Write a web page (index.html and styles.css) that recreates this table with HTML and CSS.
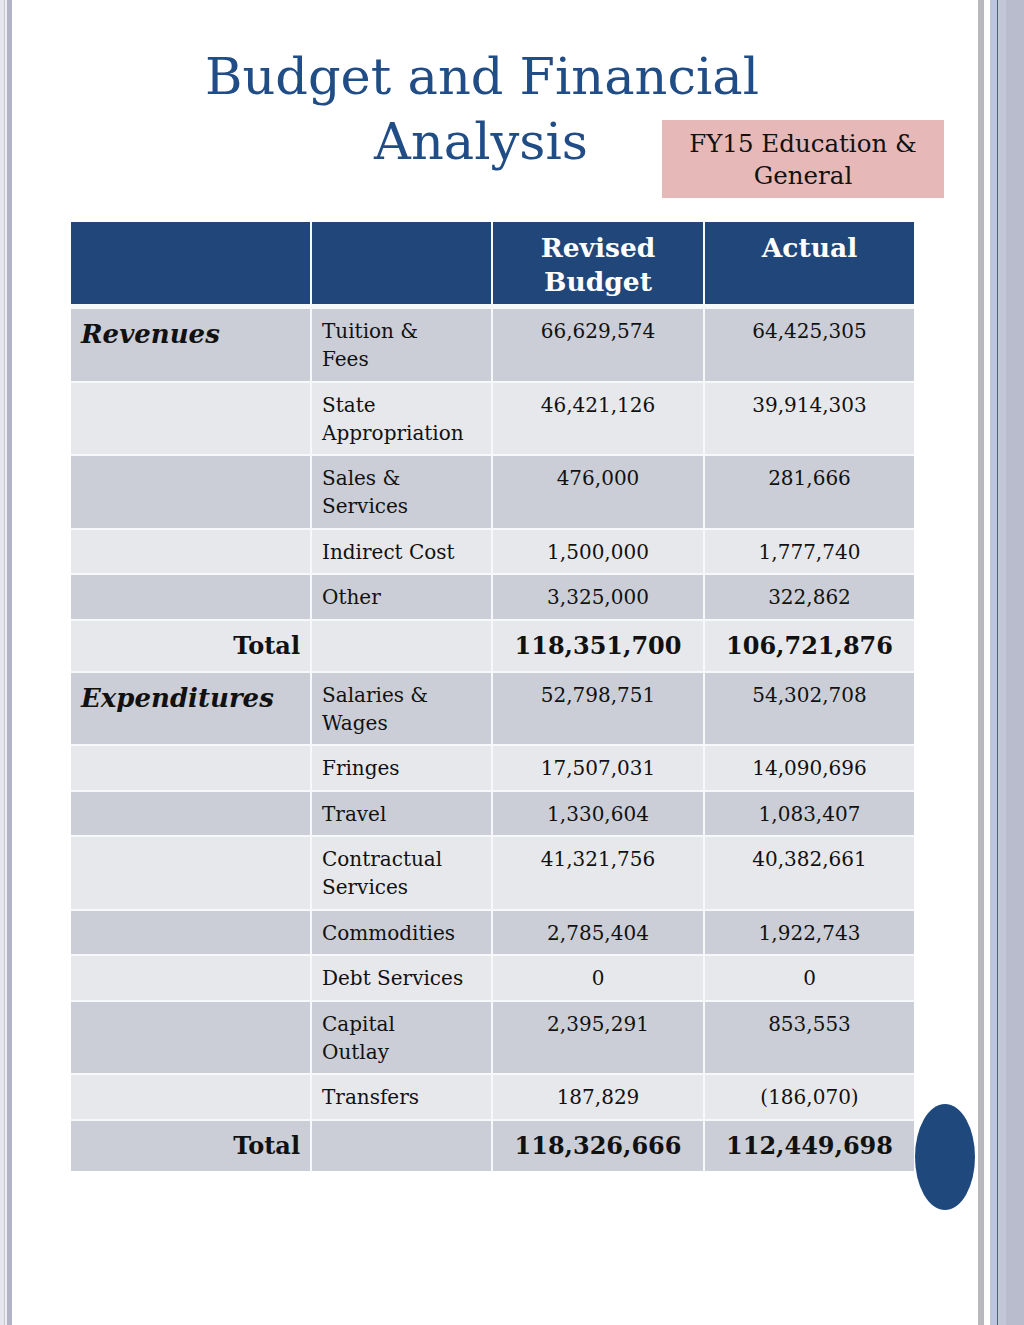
FILE: index.html
```html
<!DOCTYPE html>
<html lang="en">
<head>
<meta charset="utf-8">
<title>Budget and Financial Analysis</title>
<link rel="stylesheet" href="styles.css">
</head>
<body>
<div class="frame-left"></div>
<main class="slide">
  <header class="head">
    <h1 class="title">Budget and Financial<br>Analysis</h1>
    <div class="tag">FY15 Education &amp;<br>General</div>
  </header>
  <div class="table">
    <div class="hd"></div><div class="hd"></div><div class="hd c">Revised<br>Budget</div><div class="hd c">Actual</div>

    <div class="cell dk sec">Revenues</div><div class="cell dk">Tuition &amp;<br>Fees</div><div class="cell dk c">66,629,574</div><div class="cell dk c">64,425,305</div>
    <div class="cell lt"></div><div class="cell lt">State<br>Appropriation</div><div class="cell lt c">46,421,126</div><div class="cell lt c">39,914,303</div>
    <div class="cell dk"></div><div class="cell dk">Sales &amp;<br>Services</div><div class="cell dk c">476,000</div><div class="cell dk c">281,666</div>
    <div class="cell lt"></div><div class="cell lt">Indirect Cost</div><div class="cell lt c">1,500,000</div><div class="cell lt c">1,777,740</div>
    <div class="cell dk"></div><div class="cell dk">Other</div><div class="cell dk c">3,325,000</div><div class="cell dk c">322,862</div>
    <div class="cell lt tot r">Total</div><div class="cell lt tot"></div><div class="cell lt tot c">118,351,700</div><div class="cell lt tot c">106,721,876</div>

    <div class="cell dk sec">Expenditures</div><div class="cell dk">Salaries &amp;<br>Wages</div><div class="cell dk c">52,798,751</div><div class="cell dk c">54,302,708</div>
    <div class="cell lt"></div><div class="cell lt">Fringes</div><div class="cell lt c">17,507,031</div><div class="cell lt c">14,090,696</div>
    <div class="cell dk"></div><div class="cell dk">Travel</div><div class="cell dk c">1,330,604</div><div class="cell dk c">1,083,407</div>
    <div class="cell lt"></div><div class="cell lt">Contractual<br>Services</div><div class="cell lt c">41,321,756</div><div class="cell lt c">40,382,661</div>
    <div class="cell dk"></div><div class="cell dk">Commodities</div><div class="cell dk c">2,785,404</div><div class="cell dk c">1,922,743</div>
    <div class="cell lt"></div><div class="cell lt">Debt Services</div><div class="cell lt c">0</div><div class="cell lt c">0</div>
    <div class="cell dk"></div><div class="cell dk">Capital<br>Outlay</div><div class="cell dk c">2,395,291</div><div class="cell dk c">853,553</div>
    <div class="cell lt"></div><div class="cell lt">Transfers</div><div class="cell lt c">187,829</div><div class="cell lt c">(186,070)</div>
    <div class="cell dk tot r">Total</div><div class="cell dk tot"></div><div class="cell dk tot c">118,326,666</div><div class="cell dk tot c">112,449,698</div>
  </div>
  <div class="oval"></div>
</main>
<div class="frame-right"></div>
</body>
</html>
```
FILE: styles.css
```css
html, body {
  margin: 0;
  padding: 0;
  background: #ffffff;
}
body {
  display: flex;
  width: 1024px;
  height: 1325px;
  overflow: hidden;
  font-family: "DejaVu Serif", "Liberation Serif", serif;
  color: #111111;
}
.frame-left {
  width: 12px;
  flex: none;
  background: linear-gradient(to right,
    #e6e6ee 0, #e6e6ee 4px,
    #c6c6d0 4px, #c6c6d0 5px,
    #eeeef4 5px, #eeeef4 7px,
    #b3b3c7 7px, #b3b3c7 12px);
}
.frame-right {
  width: 46px;
  flex: none;
  background: linear-gradient(to right,
    #b9b9bd 0, #b9b9bd 6px,
    #ffffff 6px, #ffffff 12px,
    #bdc5d9 12px, #bdc5d9 19px,
    #4b6291 19px, #4b6291 20px,
    #c2c7d7 20px, #c2c7d7 28px,
    #b8bccd 28px, #b8bccd 46px);
}
.slide {
  position: relative;
  flex: 1;
  padding-top: 44px;
}
.head {
  display: grid;
  height: 178px;
}
.title {
  grid-area: 1 / 1;
  justify-self: start;
  margin: 0 0 0 193px;
  width: 552px;
  text-align: center;
  font-weight: normal;
  font-size: 51px;
  line-height: 65px;
  color: #214d86;
  white-space: nowrap;
}
.tag {
  grid-area: 1 / 1;
  justify-self: start;
  align-self: start;
  margin: 76px 0 0 650px;
  width: 282px;
  height: 78px;
  box-sizing: border-box;
  padding-top: 8px;
  background: #e6b9b8;
  text-align: center;
  font-size: 24.5px;
  line-height: 32px;
  color: #111111;
  white-space: nowrap;
}
.table {
  display: grid;
  grid-template-columns: 239px 179px 210px 209px;
  column-gap: 2px;
  row-gap: 2px;
  margin-left: 59px;
  width: 843px;
  background: #f7f8fa;
}
.hd {
  background: #21477a;
  color: #ffffff;
  font-weight: bold;
  font-size: 26.5px;
  line-height: 34px;
  height: 82px;
  box-sizing: border-box;
  padding-top: 9px;
  margin-bottom: 3px;
}
.cell {
  padding: 8px 10px 7.5px;
  font-size: 20px;
  line-height: 28px;
  min-height: 28px;
}
.dk { background: #cbced6; }
.lt { background: #e7e8eb; }
.c { text-align: center; }
.r { text-align: right; }
.sec {
  font-weight: bold;
  font-style: italic;
  font-size: 26px;
  padding-top: 11px;
}
.tot {
  font-weight: bold;
  font-size: 24px;
  line-height: 34px;
  padding: 8px 10px;
}
.oval {
  position: absolute;
  left: 903px;
  top: 1104px;
  width: 60px;
  height: 106px;
  border-radius: 50%;
  background: #1f497d;
}
```
